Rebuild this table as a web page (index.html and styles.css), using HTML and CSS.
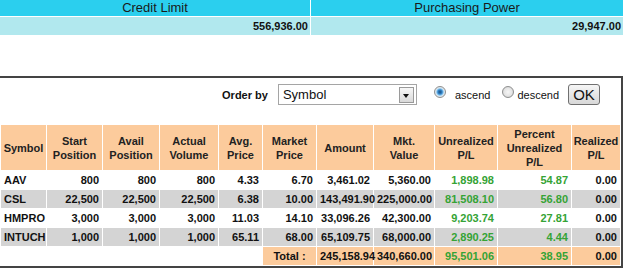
FILE: index.html
```html
<!DOCTYPE html>
<html lang="en">
<head>
    <meta charset="UTF-8">
    <title>Portfolio</title>
    <link rel="stylesheet" href="styles.css">
</head>
<body>

    <!-- Account summary -->
    <div class="summary">
        <div class="sum-head">Credit Limit</div>
        <div class="sum-head">Purchasing Power</div>
        <div class="sum-val">556,936.00</div>
        <div class="sum-val">29,947.00</div>
    </div>

    <!-- Portfolio box -->
    <div class="portfolio">
        <form class="order-bar">
            <span class="order-label">Order by</span>
            <span class="select-wrap">
                <select class="order-select">
                    <option>Symbol</option>
                </select>
                <span class="select-arrow"></span>
            </span>
            <input type="radio" class="radio radio-asc" name="dir" checked>
            <span class="radio-text text-asc">ascend</span>
            <input type="radio" class="radio radio-desc" name="dir">
            <span class="radio-text text-desc">descend</span>
            <button type="button" class="ok-btn">OK</button>
        </form>

        <table class="port-table">
            <colgroup>
                <col style="width:45px"><col style="width:55px"><col style="width:56px">
                <col style="width:58px"><col style="width:43px"><col style="width:53px">
                <col style="width:56px"><col style="width:60px"><col style="width:62px">
                <col style="width:73px"><col style="width:48px">
            </colgroup>
            <tr>
                <th>Symbol</th>
                <th>Start<br>Position</th>
                <th>Avail<br>Position</th>
                <th>Actual<br>Volume</th>
                <th>Avg.<br>Price</th>
                <th>Market<br>Price</th>
                <th>Amount</th>
                <th>Mkt.<br>Value</th>
                <th>Unrealized<br>P/L</th>
                <th>Percent<br>Unrealized<br>P/L</th>
                <th>Realized<br>P/L</th>
            </tr>
            <tr>
                <td class="sym">AAV</td><td>800</td><td>800</td><td>800</td><td>4.33</td><td>6.70</td>
                <td>3,461.02</td><td>5,360.00</td><td class="gain">1,898.98</td><td class="gain">54.87</td><td>0.00</td>
            </tr>
            <tr class="alt">
                <td class="sym">CSL</td><td>22,500</td><td>22,500</td><td>22,500</td><td>6.38</td><td>10.00</td>
                <td>143,491.90</td><td>225,000.00</td><td class="gain">81,508.10</td><td class="gain">56.80</td><td>0.00</td>
            </tr>
            <tr>
                <td class="sym">HMPRO</td><td>3,000</td><td>3,000</td><td>3,000</td><td>11.03</td><td>14.10</td>
                <td>33,096.26</td><td>42,300.00</td><td class="gain">9,203.74</td><td class="gain">27.81</td><td>0.00</td>
            </tr>
            <tr class="alt">
                <td class="sym">INTUCH</td><td>1,000</td><td>1,000</td><td>1,000</td><td>65.11</td><td>68.00</td>
                <td>65,109.75</td><td>68,000.00</td><td class="gain">2,890.25</td><td class="gain">4.44</td><td>0.00</td>
            </tr>
            <tr class="total">
                <td></td><td></td><td></td><td></td><td></td>
                <td class="total-cell total-label">Total :</td>
                <td class="total-cell">245,158.94</td>
                <td class="total-cell">340,660.00</td>
                <td class="total-cell gain">95,501.06</td>
                <td class="total-cell gain">38.95</td>
                <td class="total-cell">0.00</td>
            </tr>
        </table>
    </div>

</body>
</html>
```

FILE: styles.css
```css
body {
    margin: 0;
    padding: 0;
    font-family: "Liberation Sans", Arial, sans-serif;
    background-color: #fff;
    color: #111;
}

/* Account summary */
.summary {
    display: grid;
    grid-template-columns: 310px 312px;
    gap: 1px;
    width: 623px;
}

.sum-head {
    height: 16px;
    line-height: 16px;
    background-color: #2bcfee;
    text-align: center;
    font-size: 13px;
    color: #1a1a1a;
}

.sum-val {
    height: 18px;
    line-height: 18px;
    background-color: #b1e8ee;
    text-align: right;
    padding-right: 2px;
    font-size: 11px;
    font-weight: bold;
}

/* Portfolio box */
.portfolio {
    width: 621px;
    margin-top: 41px;
    border: 2px solid #444;
    border-left: 0;
}

.order-bar {
    display: flex;
    align-items: center;
    justify-content: flex-end;
    height: 21px;
    margin: 6px 0 19px 0;
    padding-right: 21px;
    font-size: 11px;
}

.order-label {
    font-weight: bold;
}

.select-wrap {
    position: relative;
    display: inline-block;
    margin-left: 10px;
}

.order-select {
    appearance: none;
    -webkit-appearance: none;
    width: 139px;
    height: 21px;
    margin: 0;
    padding: 0 0 0 4px;
    border: 1px solid #a5a5a5;
    border-radius: 0;
    background: #fff;
    font-family: "Liberation Sans", Arial, sans-serif;
    font-size: 13px;
    color: #111;
}

.select-arrow {
    position: absolute;
    top: 3px;
    right: 3px;
    width: 13px;
    height: 14px;
    border: 1px solid #9a9a9a;
    background: linear-gradient(#f7f7f7, #d9d9d9);
    pointer-events: none;
}

.select-arrow::after {
    content: "";
    position: absolute;
    left: 3px;
    top: 6px;
    border-left: 3.5px solid transparent;
    border-right: 3.5px solid transparent;
    border-top: 4px solid #111;
}

/* Radio buttons */
.radio {
    appearance: none;
    -webkit-appearance: none;
    width: 12px;
    height: 12px;
    margin: 0 0 5px 0;
    border: 1px solid #8e8f8f;
    border-radius: 50%;
    background: radial-gradient(circle, #f6f6f6 0, #e4e4e4 4px, #cfcfcf 6px);
}

.radio:checked {
    background: radial-gradient(circle, #1c4f80 0, #2f7fc2 2px, #6fb4e6 3px, #cde6f6 4px, #e8e8e8 5px, #d2d2d2 6px);
}

.radio-asc {
    margin-left: 17px;
}

.radio-desc {
    margin-left: 12px;
}

.text-asc {
    margin-left: 9px;
}

.text-desc {
    margin-left: 3px;
}

.ok-btn {
    width: 32px;
    height: 21px;
    margin-left: 9px;
    padding: 0;
    border: 1px solid #707070;
    border-radius: 3px;
    background: linear-gradient(#f6f6f6, #e6e6e6 50%, #d8d8d8);
    font-family: "Liberation Sans", Arial, sans-serif;
    font-size: 15px;
    color: #111;
}

/* Portfolio table */
.port-table {
    table-layout: fixed;
    border-collapse: separate;
    border-spacing: 1px;
    width: 621px;
    font-size: 11px;
    font-weight: bold;
}

.port-table th {
    height: 45px;
    padding: 0;
    background-color: #fccb9c;
    line-height: 14px;
    text-align: center;
    color: #222;
}

.port-table td {
    height: 18px;
    padding: 0 3px;
    line-height: 18px;
    text-align: right;
    white-space: nowrap;
}

.port-table td.sym {
    text-align: left;
}

.port-table tr.alt td {
    background-color: #d4d4d4;
}

.port-table td.total-cell {
    background-color: #fccb9c;
}

.port-table td.total-label {
    text-align: center;
}

.gain {
    color: #35a335;
}
```
